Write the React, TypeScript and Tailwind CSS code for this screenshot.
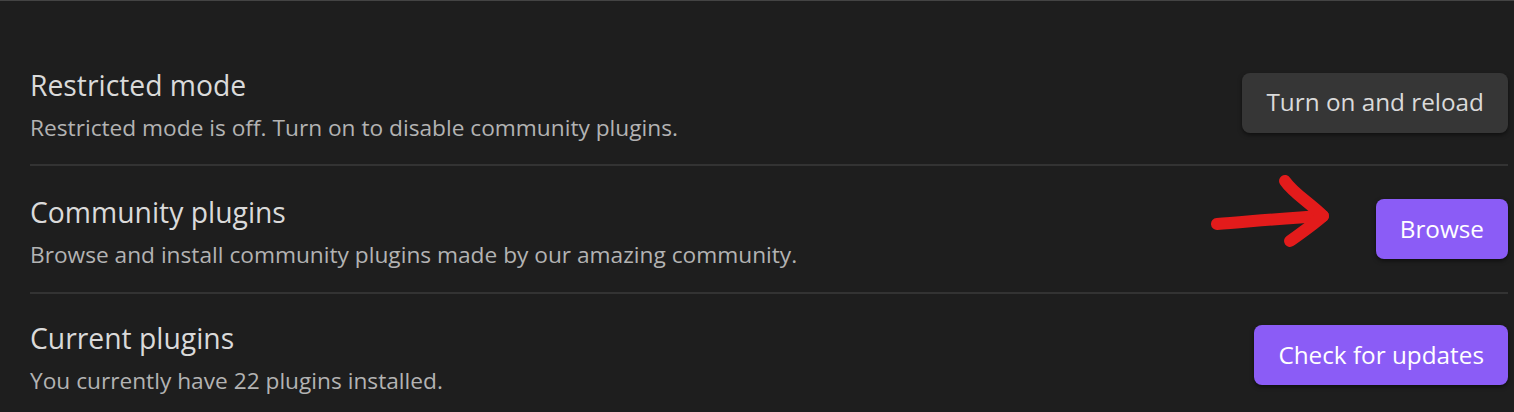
import React from "react";

const font = { fontFamily: '"Open Sans", "Noto Sans", sans-serif' };

function Row({
  title,
  desc,
  button,
  primary,
  border,
  h,
}: {
  title: string;
  desc: string;
  button: string;
  primary?: boolean;
  border?: boolean;
  h: string;
}) {
  return (
    <div
      className={`flex items-center justify-between ${h} ${
        border ? "border-b-2 border-[#333333]" : ""
      }`}
    >
      <div className="flex flex-col gap-[9px] mt-[6px]">
        <div className="text-[28.3px] leading-[36px] text-[#dadada]">{title}</div>
        <div className="text-[22.7px] leading-[32px] text-[#b3b3b3]">{desc}</div>
      </div>
      <button
        className={
          primary
            ? "h-[60px] px-[24px] rounded-[8px] bg-[#8b5cf6] text-white text-[24.3px] shadow-[0_2px_4px_rgba(0,0,0,0.5)]"
            : "h-[60px] px-[24px] rounded-[8px] bg-[#363636] text-[#dadada] text-[24.3px] shadow-[0_2px_4px_rgba(0,0,0,0.5)]"
        }
      >
        {button}
      </button>
    </div>
  );
}

export default function App() {
  return (
    <div
      className="relative w-[1514px] h-[412px] overflow-hidden bg-[#1e1e1e] border-t border-[#444444] pt-[40px] pl-[30px] pr-[6px]"
      style={font}
    >
      <Row
        title="Restricted mode"
        desc="Restricted mode is off. Turn on to disable community plugins."
        button="Turn on and reload"
        border
        h="h-[125px]"
      />
      <Row
        title="Community plugins"
        desc="Browse and install community plugins made by our amazing community."
        button="Browse"
        primary
        border
        h="h-[128px]"
      />
      <Row
        title="Current plugins"
        desc="You currently have 22 plugins installed."
        button="Check for updates"
        primary
        h="h-[122px]"
      />
      <svg
        className="absolute left-[1205px] top-[170px]"
        width="140"
        height="80"
        viewBox="0 0 140 80"
        fill="none"
      >
        <path
          d="M12 53 C 40 51, 80 47, 118 45"
          stroke="#e31b1b"
          strokeWidth="12"
          strokeLinecap="round"
        />
        <path
          d="M80 10 C 88 22, 105 32, 118 45 C 108 54, 96 62, 85 70"
          stroke="#e31b1b"
          strokeWidth="12"
          strokeLinecap="round"
          strokeLinejoin="round"
        />
      </svg>
    </div>
  );
}
